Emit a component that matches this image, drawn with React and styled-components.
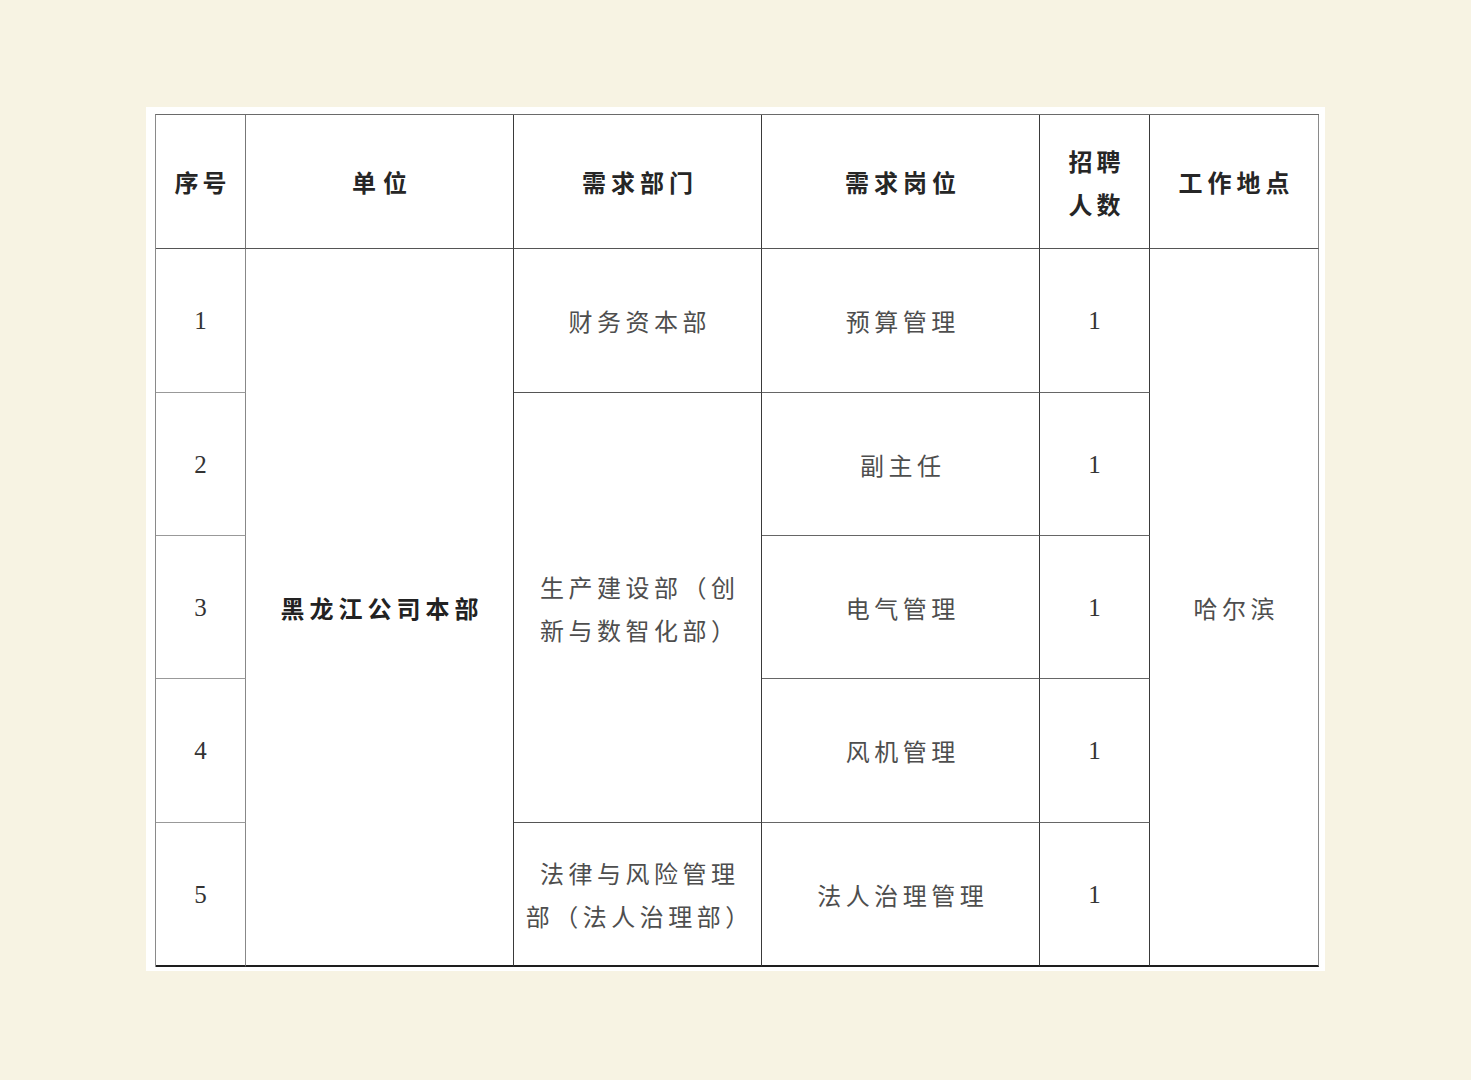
import React from 'react';
import styled, { createGlobalStyle } from 'styled-components';

const GlobalStyle = createGlobalStyle`
    html, body {
        margin: 0;
        background: #f7f3e3;
    }
    body {
        font-family: "Noto Sans CJK SC", "Liberation Serif", serif;
    }
`;

const Page = styled.div`
    min-height: 1080px;
    padding: 107px 0 0 146px;
    box-sizing: border-box;
`;

const Card = styled.div`
    width: 1179px;
    height: 864px;
    background: #ffffff;
    padding: 7px 0 0 9px;
    box-sizing: border-box;
`;

const Grid = styled.div`
    display: grid;
    grid-template-columns: 90px 268px 248px 278px 110px 169px;
    grid-template-rows: 134px 144px 143px 143px 144px 144px;
    width: 1164px;
    border-left: 1.5px solid #8a8a8a;
    border-top: 1.5px solid #6a6a6a;
    box-sizing: border-box;
`;

const Cell = styled.div`
    display: flex;
    align-items: center;
    justify-content: center;
    text-align: center;
    box-sizing: border-box;
    border-right: 1.5px solid ${(p) => p.$rightLine || '#3a3a3a'};
    border-bottom: ${(p) => (p.$last ? '2px solid #1e1e1e' : `1.5px solid ${p.$bottomLine || '#555'}`)};
    grid-column: ${(p) => p.$col};
    grid-row: ${(p) => p.$row};
    font-size: 24px;
    line-height: 43px;
    color: ${(p) => (p.$head ? '#262626' : '#4e4e4e')};
    font-weight: ${(p) => (p.$head ? 700 : 400)};
`;

const Label = styled.span`
    letter-spacing: ${(p) => p.$spacing ?? 4.5}px;
    margin-right: -${(p) => p.$spacing ?? 4.5}px;
`;

const Num = styled.span`
    font-family: "Liberation Serif", "Times New Roman", serif;
    font-size: 25px;
    color: #333;
`;

const Unit = styled(Label)`
    color: #222;
    font-weight: 700;
`;

const rows = [
    { no: 1, post: '预算管理' },
    { no: 2, post: '副主任' },
    { no: 3, post: '电气管理' },
    { no: 4, post: '风机管理' },
    { no: 5, post: '法人治理管理' },
];

export default function App() {
    return (
        <Page>
            <GlobalStyle />
            <Card>
                <Grid>
                    <Cell $head $col="1" $row="1" $rightLine="#777">
                        <Label $spacing={4}>序号</Label>
                    </Cell>
                    <Cell $head $col="2" $row="1">
                        <Label $spacing={7}>单位</Label>
                    </Cell>
                    <Cell $head $col="3" $row="1">
                        <Label $spacing={5}>需求部门</Label>
                    </Cell>
                    <Cell $head $col="4" $row="1">
                        <Label $spacing={5}>需求岗位</Label>
                    </Cell>
                    <Cell $head $col="5" $row="1">
                        <Label $spacing={4}>
                            招聘
                            <br />
                            人数
                        </Label>
                    </Cell>
                    <Cell $head $col="6" $row="1" $rightLine="#8a8a8a">
                        <Label $spacing={5}>工作地点</Label>
                    </Cell>

                    {rows.map((r, i) => (
                        <Cell
                            key={r.no}
                            $col="1"
                            $row={`${i + 2}`}
                            $rightLine="#888"
                            $bottomLine="#999"
                            $last={i === rows.length - 1}
                        >
                            <Num>{r.no}</Num>
                        </Cell>
                    ))}

                    <Cell $col="2" $row="2 / span 5" $last>
                        <Unit $spacing={5}>黑龙江公司本部</Unit>
                    </Cell>

                    <Cell $col="3" $row="2">
                        <Label>财务资本部</Label>
                    </Cell>
                    <Cell $col="3" $row="3 / span 3">
                        <Label>
                            生产建设部（创
                            <br />
                            新与数智化部）
                        </Label>
                    </Cell>
                    <Cell $col="3" $row="6" $last>
                        <Label>
                            法律与风险管理
                            <br />
                            部（法人治理部）
                        </Label>
                    </Cell>

                    {rows.map((r, i) => (
                        <Cell key={r.post} $col="4" $row={`${i + 2}`} $bottomLine="#666" $last={i === rows.length - 1}>
                            <Label>{r.post}</Label>
                        </Cell>
                    ))}

                    {rows.map((r, i) => (
                        <Cell key={`n${r.no}`} $col="5" $row={`${i + 2}`} $bottomLine="#666" $last={i === rows.length - 1}>
                            <Num>1</Num>
                        </Cell>
                    ))}

                    <Cell $col="6" $row="2 / span 5" $rightLine="#8a8a8a" $last>
                        <Label>哈尔滨</Label>
                    </Cell>
                </Grid>
            </Card>
        </Page>
    );
}
